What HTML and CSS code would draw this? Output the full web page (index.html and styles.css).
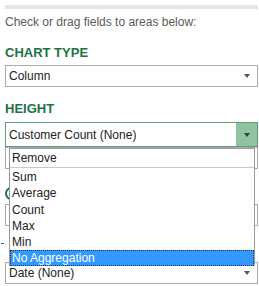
FILE: index.html
```html
<!DOCTYPE html>
<html>

<head lang="en">
    <meta charset="UTF-8">
    <title>Field list</title>
    <link rel="stylesheet" href="styles.css">
</head>

<body>
    <div class="pane">
        <div class="topbar"></div>
        <p class="hint">Check or drag fields to areas below:</p>

        <h3 class="head">CHART TYPE</h3>
        <div class="select">
            <span>Column</span>
            <span class="arrow"></span>
        </div>

        <h3 class="head head-height">HEIGHT</h3>
        <div class="field">
            <div class="select active">
                <span>Customer Count (None)</span>
                <span class="btn"><span class="arrow"></span></span>
            </div>
            <ul class="droplist">
                <li class="first">Remove</li>
                <li class="sep"></li>
                <li>Sum</li>
                <li>Average</li>
                <li>Count</li>
                <li>Max</li>
                <li>Min</li>
                <li class="current">No Aggregation</li>
            </ul>
        </div>
        <div class="select ghost"></div>

        <!-- heading mostly hidden under the open list -->
        <div class="head-color"><span class="sliver"></span></div>
        <div class="select under"></div>

        <div class="mark"></div>
        <div class="select date">
            <span>Date (None)</span>
            <span class="arrow"></span>
        </div>
    </div>
</body>

</html>
```

FILE: styles.css
```css
body,
ul,
li,
p,
h3 {
    margin: 0;
    padding: 0;
    list-style: none;
}

body {
    font-family: "Liberation Sans", Arial, sans-serif;
    font-size: 12px;
    color: #444;
    background: #fff;
}

.pane {
    padding: 5px 1px 0 5px;
}

.topbar {
    height: 4px;
    background: #e6e6e6;
}

.hint {
    margin-top: 5px;
    line-height: 16px;
    color: #5a5a5a;
}

.head {
    margin-top: 15px;
    font-size: 13px;
    font-weight: bold;
    line-height: 16px;
    color: #207245;
}

.head-height {
    margin-top: 14px;
}

.select {
    height: 20px;
    margin-top: 4px;
    padding-left: 3px;
    border: 1px solid #ababab;
    display: flex;
    align-items: center;
    justify-content: space-between;
    color: #222;
    background: #fff;
}

.arrow {
    width: 0;
    height: 0;
    margin-right: 7px;
    border-left: 3.5px solid transparent;
    border-right: 3.5px solid transparent;
    border-top: 4px solid #555;
}

.field {
    position: relative;
    margin-top: 5px;
}

.select.active {
    height: 23px;
    margin-top: 0;
    border-color: #5f9c77;
    padding-right: 0;
}

.btn {
    width: 21px;
    height: 100%;
    background: #8fc3a2;
    display: flex;
    align-items: center;
    justify-content: center;
}

.btn .arrow {
    margin-right: 0;
    border-top-color: #3d3d3d;
}

.droplist {
    position: absolute;
    left: 4px;
    top: calc(100% + 1px);
    width: 244px;
    border: 1px solid #9a9a9a;
    border-bottom: 0;
    background: #fff;
    color: #222;
    z-index: 2;
}

.droplist li {
    height: 16.3px;
    line-height: 16px;
    padding-left: 2px;
}

.droplist li.first {
    height: 17px;
    line-height: 18px;
}

.droplist li.sep {
    height: 1px;
    margin: 1px 0;
    padding: 0;
    background: #c8c8c8;
}

.droplist li.current {
    height: 16px;
    background: #3399ff;
    color: #fff;
    outline: 1px dotted #1a3a66;
    outline-offset: -1px;
}

.select.ghost {
    margin-top: 0;
    height: 20px;
}

.head-color {
    height: 16px;
    margin-top: 16px;
    display: flex;
    align-items: center;
}

.sliver {
    width: 8px;
    height: 9px;
    margin-top: 1px;
    border: 2px solid #207245;
    border-radius: 50%;
}

.select.under {
    margin-top: 3px;
}

.mark {
    width: 3px;
    height: 1px;
    margin: 17px 0 0 -4px;
    background: #207245;
}

.select.date {
    margin-top: 18px;
}
```
